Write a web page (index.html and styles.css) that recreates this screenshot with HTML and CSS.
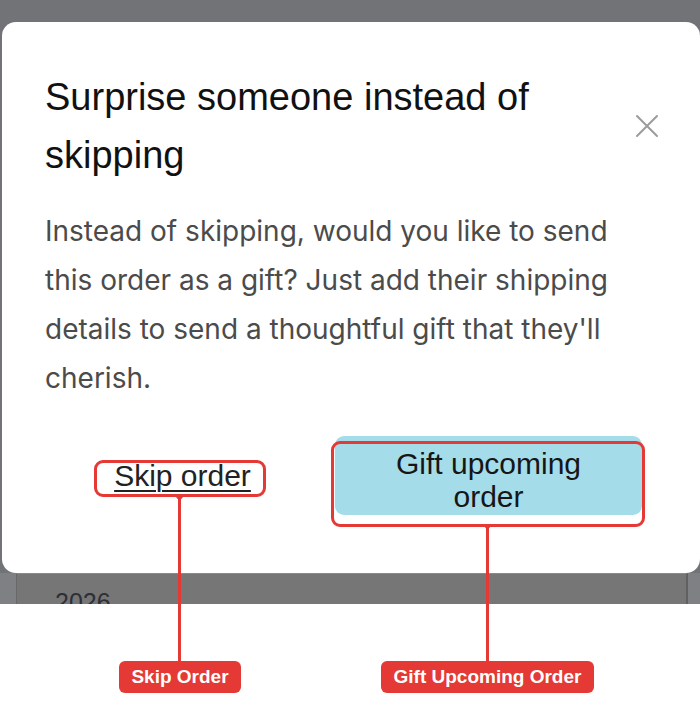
FILE: index.html
```html
<!DOCTYPE html>
<html lang="en">
<head>
<meta charset="utf-8">
<title>Surprise someone instead of skipping</title>
<link rel="stylesheet" href="styles.css">
</head>
<body>
<div class="screen">
  <div class="backdrop">
    <div class="modal">
      <div class="modal-head">
        <h2 class="title">Surprise someone instead of skipping</h2>
        <button class="close" aria-label="Close">
          <svg width="24" height="24" viewBox="0 0 24 24"><path d="M2 2 L22 22 M22 2 L2 22" stroke="#9b9b9b" stroke-width="2" fill="none" stroke-linecap="round"/></svg>
        </button>
      </div>
      <p class="desc">Instead of skipping, would you like to send this order as a gift? Just add their shipping details to send a thoughtful gift that they'll cherish.</p>
      <div class="actions">
        <div class="skip-cell"><a class="skip" href="#">Skip order</a></div>
        <button class="gift">Gift upcoming<br>order</button>
      </div>
    </div>
    <div class="under">
      <div class="year-card">2026</div>
    </div>
  </div>

  <div class="annot outline-skip"></div>
  <div class="annot outline-gift"></div>
  <div class="annot line line-skip"><span class="notch"></span></div>
  <div class="annot line line-gift"><span class="notch"></span></div>
  <div class="annot label label-skip">Skip Order</div>
  <div class="annot label label-gift">Gift Upcoming Order</div>
</div>
</body>
</html>
```

FILE: styles.css
```css
* { box-sizing: border-box; }
html, body { margin: 0; padding: 0; background: #ffffff; }
body { width: 700px; height: 708px; overflow: hidden; }

.screen {
  position: relative;
  width: 700px;
  height: 708px;
  background: #ffffff;
}

.backdrop {
  height: 604px;
  background: #717377;
  padding-top: 22px;
  display: flex;
  flex-direction: column;
  overflow: hidden;
}

.modal {
  margin-left: 2px;
  width: 698px;
  height: 551px;
  flex: none;
  background: #ffffff;
  border-radius: 14px;
  padding: 46px 42px 0 43px;
  position: relative;
  z-index: 1;
}

.modal-head {
  display: flex;
  align-items: center;
  justify-content: space-between;
  gap: 20px;
}

.title {
  margin: 0;
  width: 540px;
  font-family: "Liberation Sans", Arial, sans-serif;
  font-weight: 400;
  font-size: 38px;
  line-height: 58px;
  color: #111111;
}

.close {
  border: 0;
  background: none;
  padding: 0;
  width: 24px;
  height: 24px;
  margin-right: -1px;
  display: block;
}
.close svg { display: block; }

.desc {
  margin: 23px 0 0;
  font-family: Inter, "Noto Sans", sans-serif;
  font-size: 28px;
  line-height: 49px;
  color: #4b4b4b;
  width: 580px;
}

.actions {
  margin-top: 33px;
  width: 597px;
  display: grid;
  grid-template-columns: 1fr 307px;
  column-gap: 15px;
  align-items: center;
}

.skip-cell {
  display: flex;
  justify-content: center;
}

.skip {
  font-family: "Liberation Sans", Arial, sans-serif;
  font-size: 30px;
  color: #222222;
  text-decoration: underline;
  text-decoration-thickness: 2px;
  text-underline-offset: 4px;
}

.gift {
  height: 79px;
  border: 0;
  border-radius: 9px;
  background: #a5dcea;
  font-family: "Liberation Sans", Arial, sans-serif;
  font-size: 30px;
  line-height: 33px;
  color: #161616;
  padding: 9px 0 0;
}

.under {
  flex: 1;
  display: flex;
  background: #7e8084;
  padding: 0 12px 0 16px;
}

.year-card {
  flex: 1;
  background: #767676;
  border-left: 1px solid #686868;
  border-right: 2px solid #5f6062;
  border-top: 1px solid #8a8a8a;
  padding: 13px 0 0 38px;
  font-family: "Liberation Sans", Arial, sans-serif;
  font-size: 25px;
  line-height: 30px;
  color: #2c3038;
}

/* annotation overlay */
.annot { position: absolute; z-index: 5; }

.outline-skip {
  left: 94px; top: 460px; width: 172px; height: 37px;
  border: 3px solid #e53935;
  border-radius: 9px;
}
.outline-gift {
  left: 331px; top: 441px; width: 314px; height: 86px;
  border: 3px solid #e53935;
  border-radius: 9px;
}

.line { width: 3px; background: #e53935; }
.line-skip { left: 178px; top: 497px; height: 164px; }
.line-gift { left: 486px; top: 526px; height: 135px; }

.notch {
  position: absolute;
  left: -3px;
  top: -1px;
  width: 9px;
  height: 5px;
  background: #e53935;
  clip-path: polygon(0 0, 100% 0, 50% 100%);
}

.label {
  top: 661px;
  height: 32px;
  background: #e53935;
  border-radius: 6px;
  color: #ffffff;
  font-family: "Liberation Sans", Arial, sans-serif;
  font-weight: 700;
  font-size: 19px;
  line-height: 32px;
  text-align: center;
}
.label-skip { left: 119px; width: 122px; }
.label-gift { left: 381px; width: 213px; }
```
